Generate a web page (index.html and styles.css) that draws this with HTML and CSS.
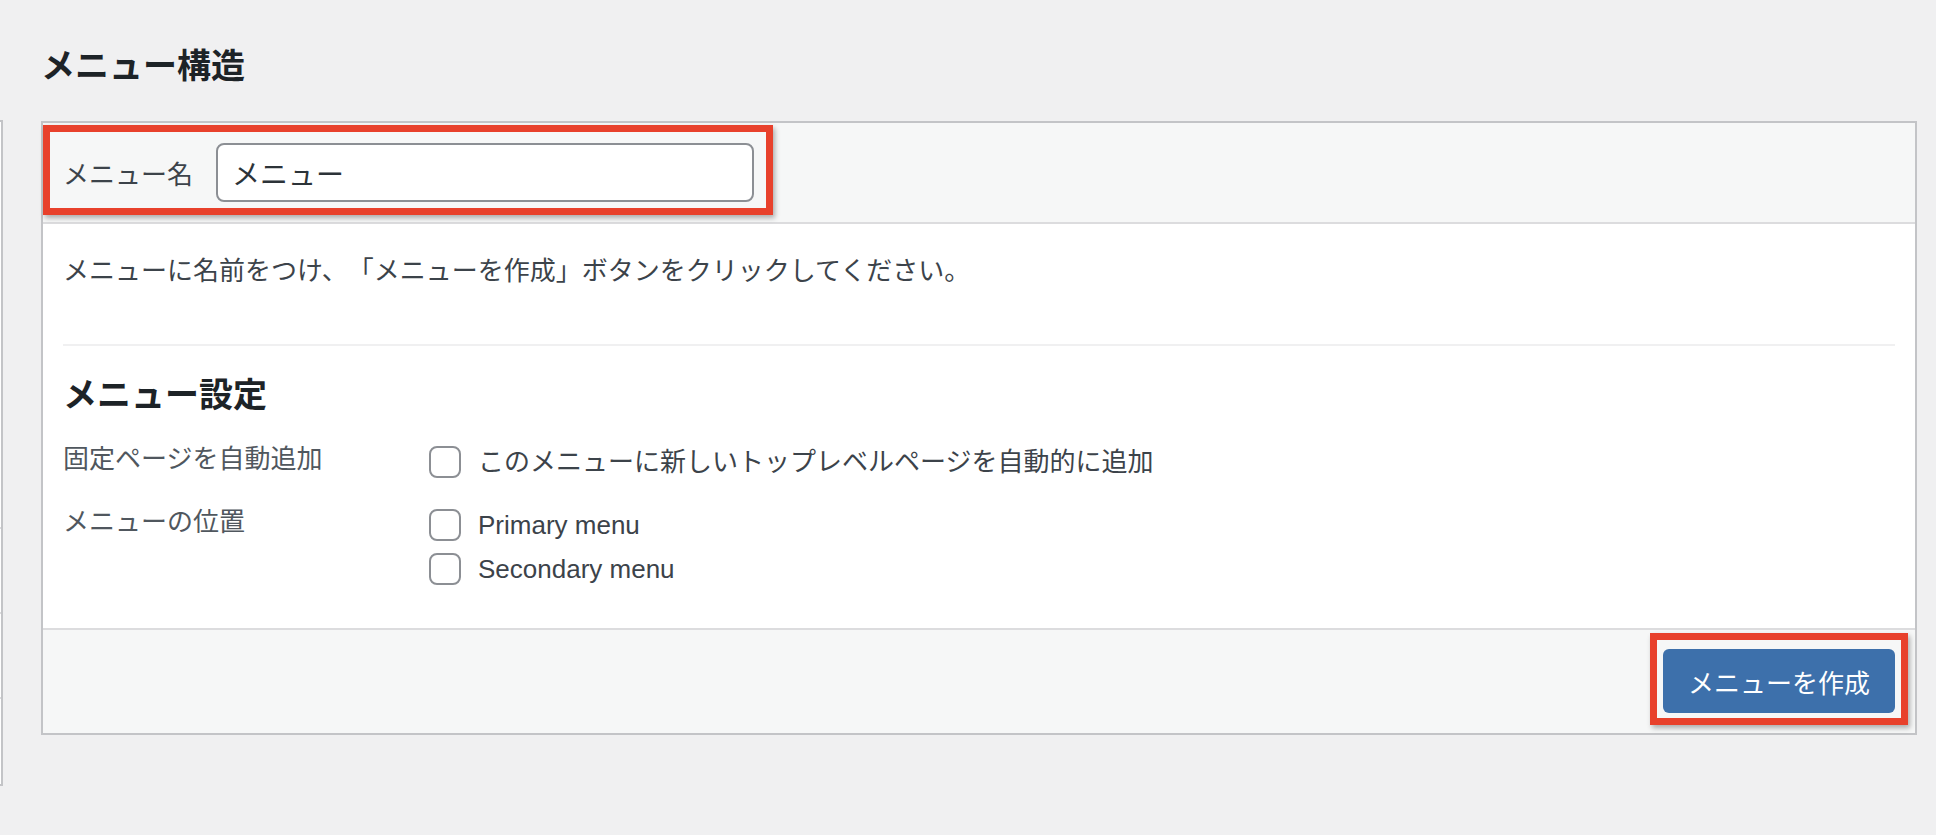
FILE: index.html
```html
<!DOCTYPE html>
<html lang="ja">
<head>
    <meta charset="UTF-8">
    <meta name="viewport" content="width=device-width, initial-scale=1.0">
    <title>メニュー構造</title>
    <link rel="stylesheet" href="styles.css">
</head>
<body>
    <div class="wrap">
        <div class="side-col">
            <div class="side-section open"></div>
            <div class="side-section"></div>
            <div class="side-section"></div>
            <div class="side-section"></div>
        </div>
        <div class="management">
            <h2>メニュー構造</h2>
            <div class="menu-edit">
                <div class="menu-header">
                    <label class="menu-name-label" for="menu-name">メニュー名</label>
                    <input type="text" id="menu-name" class="menu-name" value="メニュー">
                    <span class="mark mark-name"></span>
                </div>
                <div class="menu-body">
                    <p class="instructions">メニューに名前をつけ、「メニューを作成」ボタンをクリックしてください。</p>
                    <div class="menu-settings">
                        <h3>メニュー設定</h3>
                        <div class="setting-row">
                            <div class="setting-label">固定ページを自動追加</div>
                            <div class="setting-options">
                                <label class="option"><input type="checkbox"><span>このメニューに新しいトップレベルページを自動的に追加</span></label>
                            </div>
                        </div>
                        <div class="setting-row">
                            <div class="setting-label">メニューの位置</div>
                            <div class="setting-options">
                                <label class="option"><input type="checkbox"><span>Primary menu</span></label>
                                <label class="option"><input type="checkbox"><span>Secondary menu</span></label>
                            </div>
                        </div>
                    </div>
                </div>
                <div class="menu-footer">
                    <button class="button-primary">メニューを作成</button>
                    <span class="mark mark-save"></span>
                </div>
            </div>
        </div>
    </div>
</body>
</html>
```

FILE: styles.css
```css
* {
    margin: 0;
    padding: 0;
    box-sizing: border-box;
}

body {
    background-color: #f0f0f1;
    color: #3c434a;
    font-family: 'Liberation Sans', 'Noto Sans CJK JP', sans-serif;
    font-size: 26px;
    text-spacing-trim: space-all;
    height: 100vh;
    overflow: hidden;
}

.wrap {
    display: flex;
    align-items: flex-start;
}

/* left column, mostly scrolled out of view */
.side-col {
    width: 300px;
    margin-left: -297px;
    margin-top: 120px;
    flex-shrink: 0;
    border: 2px solid #c3c4c7;
    background-color: #ffffff;
}

    .side-col .side-section {
        height: 85px;
        border-bottom: 2px solid #dcdcde;
    }

        .side-col .side-section.open {
            height: 407px;
        }

        .side-col .side-section:last-child {
            border-bottom: none;
        }

.management {
    flex: 1;
    margin-left: 38px;
    margin-right: 19px;
    padding-top: 44px;
}

    .management h2 {
        font-size: 34px;
        line-height: 44px;
        font-weight: 700;
        color: #1d2327;
        margin-bottom: 33px;
    }

.menu-edit {
    border: 2px solid #c3c4c7;
    background-color: #ffffff;
}

.menu-header {
    position: relative;
    height: 101px;
    display: flex;
    align-items: center;
    gap: 23px;
    padding: 0 20px;
    background-color: #f6f7f7;
    border-bottom: 2px solid #dcdcde;
}

.menu-name-label {
    font-size: 26px;
    color: #3c434a;
}

.menu-name {
    width: 538px;
    height: 59px;
    padding: 0 14px;
    border: 2px solid #8c8f94;
    border-radius: 8px;
    font-family: inherit;
    font-size: 28px;
    color: #2c3338;
    background-color: #ffffff;
    outline: none;
}

.menu-body {
    padding: 28px 20px 37px;
}

.instructions {
    line-height: 39px;
    margin-bottom: 53px;
}

.menu-settings {
    border-top: 2px solid #f0f0f1;
}

    .menu-settings h3 {
        font-size: 34px;
        line-height: 44px;
        font-weight: 700;
        color: #1d2327;
        margin: 27px 0 23px;
    }

.setting-row {
    display: flex;
    align-items: flex-start;
}

    .setting-row + .setting-row {
        margin-top: 19px;
    }

.setting-label {
    width: 366px;
    flex-shrink: 0;
    line-height: 38px;
    color: #50575e;
}

.option {
    display: flex;
    align-items: center;
    gap: 17px;
    height: 44px;
}

    .option input {
        appearance: none;
        -webkit-appearance: none;
        width: 32px;
        height: 32px;
        border: 2px solid #8c8f94;
        border-radius: 8px;
        background-color: #ffffff;
    }

    .option span {
        line-height: 38px;
        color: #3c434a;
    }

.menu-footer {
    position: relative;
    display: flex;
    justify-content: flex-end;
    padding: 19px 20px 20px;
    background-color: #f6f7f7;
    border-top: 2px solid #dcdcde;
}

.button-primary {
    height: 64px;
    padding: 0 25px;
    border: none;
    border-radius: 6px;
    background-color: #3d70ab;
    color: #ffffff;
    font-family: inherit;
    font-size: 26px;
    cursor: pointer;
}

/* red annotation frames */
.mark {
    position: absolute;
    border: 7px solid #e8412c;
    box-shadow: 2px 3px 5px rgba(0, 0, 0, 0.3);
    pointer-events: none;
}

.mark-name {
    left: 0;
    top: 2px;
    width: 730px;
    height: 90px;
}

.mark-save {
    right: 7px;
    top: 3px;
    width: 258px;
    height: 92px;
}
```
